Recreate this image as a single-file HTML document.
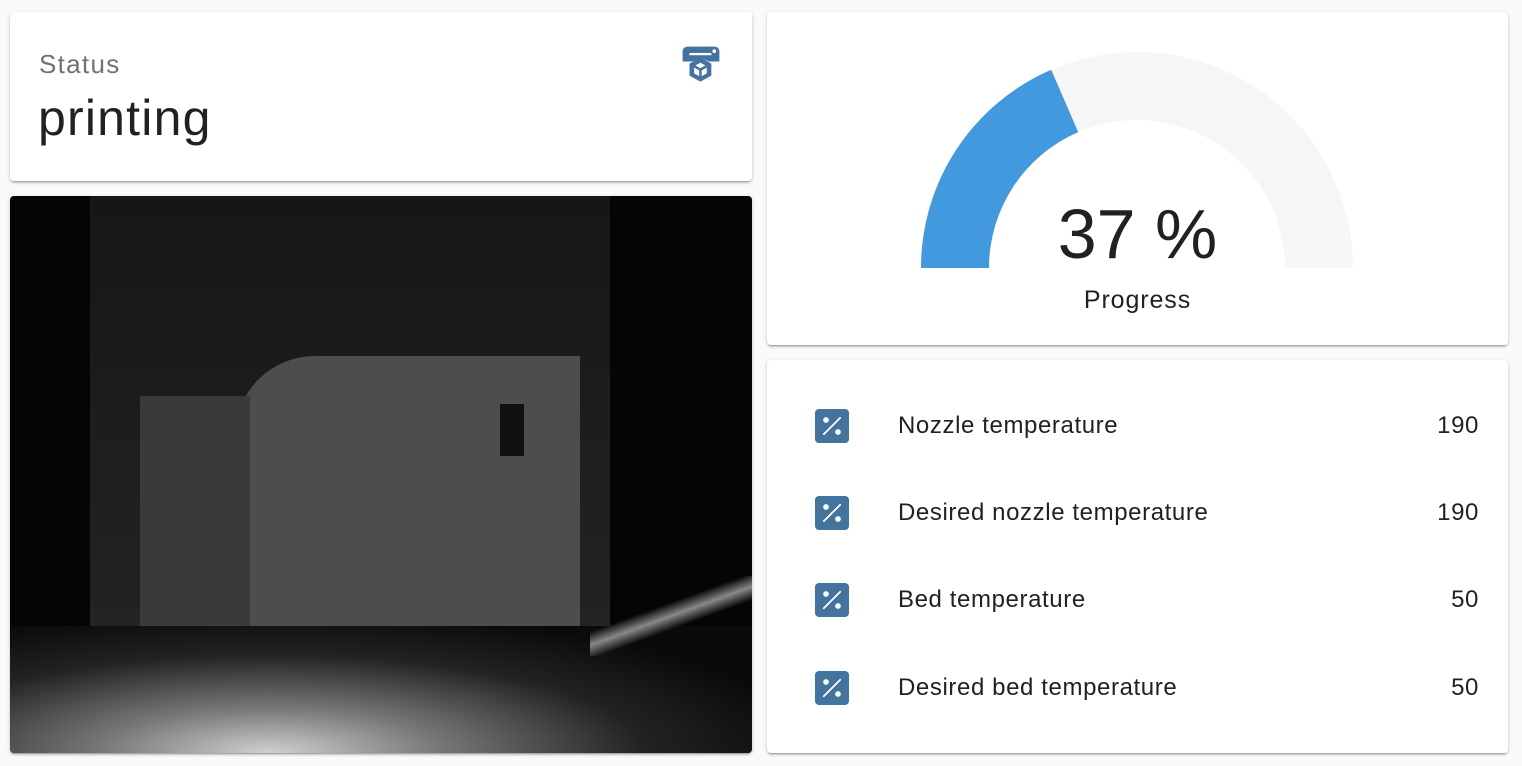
<!DOCTYPE html>
<html><head><style>
body{margin:0;width:1522px;height:766px;background:#fafafa;font-family:"Liberation Sans",Roboto,sans-serif;position:relative;overflow:hidden}
.card{position:absolute;background:#fff;border-radius:4px;box-shadow:0 2px 2px rgba(0,0,0,.14),0 1px 5px rgba(0,0,0,.12),0 3px 1px -2px rgba(0,0,0,.2)}
.row{position:absolute;left:0;right:0;height:40px;display:flex;align-items:center;font-size:24px;letter-spacing:0.6px;color:#212121}
.ic{position:absolute;left:48px;width:34px;height:34px;background:#44739e;border-radius:4px}
.lbl{position:absolute;left:131px}
.val{position:absolute;right:29px}
.ic::after{content:"";position:absolute;left:0;top:0;width:34px;height:34px;background:
radial-gradient(circle at 11px 11px,#fff 2.6px,transparent 3px),radial-gradient(circle at 23px 23px,#fff 2.6px,transparent 3px),
linear-gradient(135deg,transparent 46%,#fff 46%,#fff 54%,transparent 54%) 8px 8px/18px 18px no-repeat}
</style></head><body>
<div class="card" style="left:10px;top:12px;width:742px;height:169px">
 <div style="position:absolute;left:29px;top:37px;font-size:26px;letter-spacing:1.3px;color:#727272">Status</div>
 <div style="position:absolute;left:28px;top:77px;font-size:50px;letter-spacing:1.2px;color:#212121">printing</div>
 <svg style="position:absolute;left:668px;top:30px" width="46" height="46" viewBox="0 0 40 40">
  <path d="M4 17V8a4 4 0 0 1 4-4h24a4 4 0 0 1 4 4v9h-9l-7-3-7 3z" fill="#44739e"/><rect x="10" y="9.5" width="19" height="2" fill="#fff"/><circle cx="31.5" cy="8" r="1.6" fill="#fff"/>
  <path d="M19.5 13.5l9.5 5.3v10.4l-9.5 5.3-9.5-5.3v-10.4z" fill="#44739e"/><path d="M19.5 18l5.5 3v6.3l-5.5 3-5.5-3v-6.3z" fill="#fff"/><path d="M19.5 24l5.5-3M19.5 24l-5.5-3M19.5 24v6.5" stroke="#44739e" stroke-width="2.2" fill="none"/>
 </svg>
</div>
<div class="card" style="left:10px;top:196px;width:742px;height:557px;background:#050505;overflow:hidden">
 <div style="position:absolute;left:80px;top:0;width:520px;height:520px;background:linear-gradient(#161616,#262626)"></div>
 <div style="position:absolute;left:225px;top:160px;width:345px;height:280px;background:#4d4d4d;border-radius:80px 0 0 0"></div>
 <div style="position:absolute;left:130px;top:200px;width:110px;height:230px;background:#3a3a3a"></div>
 <div style="position:absolute;left:370px;top:440px;width:90px;height:85px;background:#8a8a8a"></div>
 <div style="position:absolute;left:0;top:430px;width:742px;height:127px;background:radial-gradient(ellipse at 35% 100%,#d0d0d0 0,#777 25%,#222 55%,#0a0a0a 80%)"></div>
 <div style="position:absolute;left:490px;top:208px;width:24px;height:52px;background:#111"></div>
 <div style="position:absolute;left:580px;top:380px;width:162px;height:80px;background:linear-gradient(160deg,transparent 40%,#888 50%,transparent 60%)"></div>
</div>
<div class="card" style="left:767px;top:12px;width:741px;height:333px">
 <svg style="position:absolute;left:0;top:0" width="741" height="333">
  <path d="M154 256A216 216 0 0 1 586 256H518A148 148 0 0 0 222 256Z" fill="#f6f6f6"/>
  <path d="M154 256A216 216 0 0 1 284.2 57.7L311.2 120.1A148 148 0 0 0 222 256Z" fill="#4299de"/>
 </svg>
 <div style="position:absolute;left:0;right:0;top:182px;text-align:center;font-size:70px;color:#212121">37 %</div>
 <div style="position:absolute;left:0;right:0;top:274px;text-align:center;font-size:25px;letter-spacing:0.9px;color:#212121">Progress</div>
</div>
<div class="card" style="left:767px;top:360px;width:741px;height:393px">
 <div class="row" style="top:46px"><div class="ic"></div><span class="lbl">Nozzle temperature</span><span class="val">190</span></div>
 <div class="row" style="top:133px"><div class="ic"></div><span class="lbl">Desired nozzle temperature</span><span class="val">190</span></div>
 <div class="row" style="top:220px"><div class="ic"></div><span class="lbl">Bed temperature</span><span class="val">50</span></div>
 <div class="row" style="top:308px"><div class="ic"></div><span class="lbl">Desired bed temperature</span><span class="val">50</span></div>
</div>
</body></html>
